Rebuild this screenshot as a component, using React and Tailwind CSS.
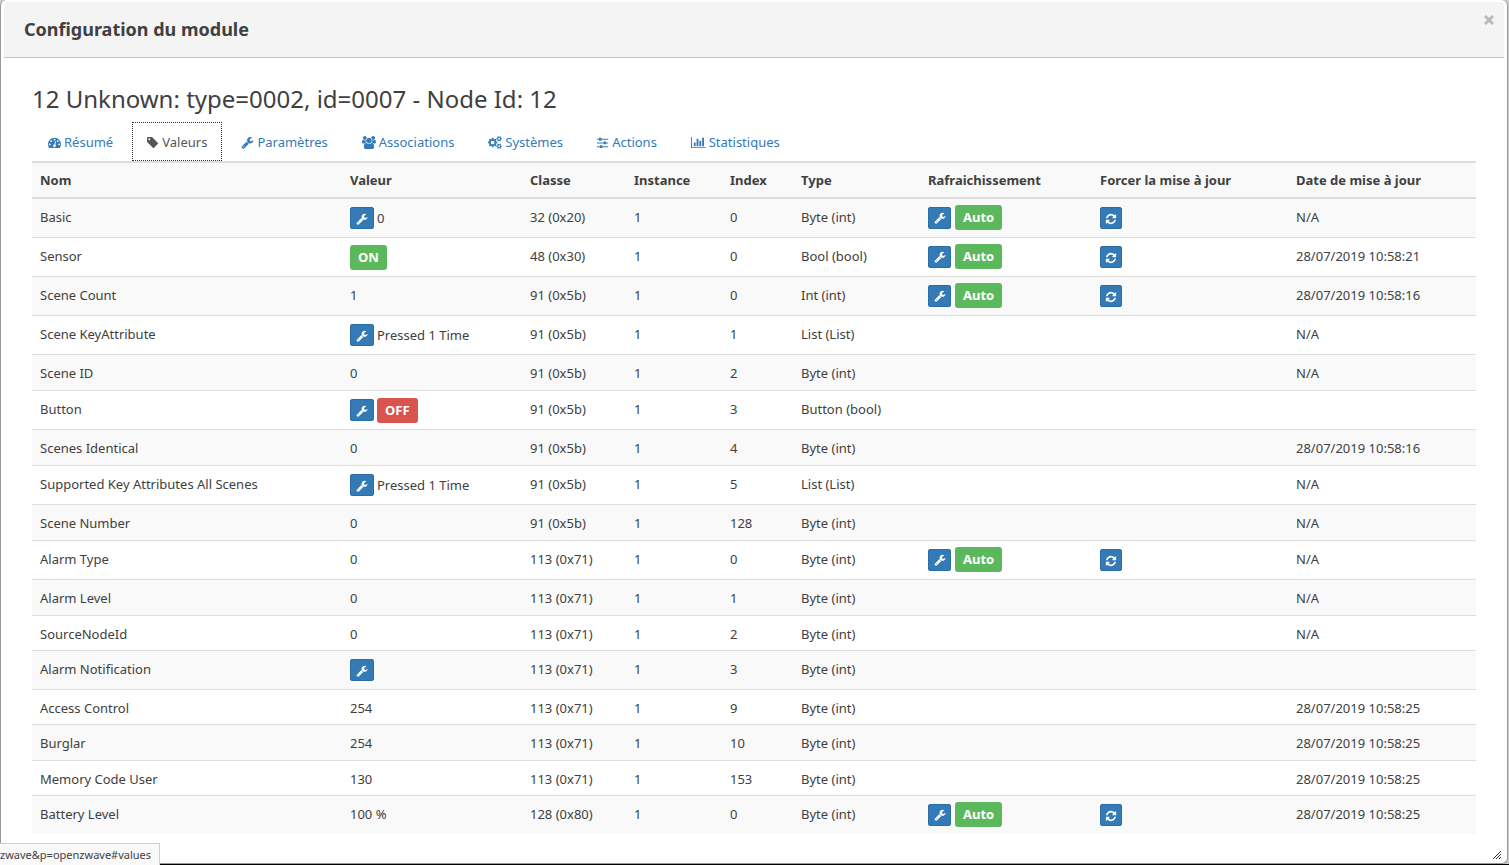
import clsx from 'clsx'

const ICONS = {
  dashboard: {
    width: 1792,
    path: 'M384 1152q0-53-37.5-90.5t-90.5-37.5-90.5 37.5-37.5 90.5 37.5 90.5 90.5 37.5 90.5-37.5 37.5-90.5zm192-448q0-53-37.5-90.5t-90.5-37.5-90.5 37.5-37.5 90.5 37.5 90.5 90.5 37.5 90.5-37.5 37.5-90.5zm428 481l101-382q6-26-7.5-48.5t-38.5-29.5-48 6.5-30 39.5l-101 382q-60 5-107 43.5t-63 98.5q-20 77 20 146t117 89 146-20 89-117q16-60-6-117t-72-91zm660-33q0-53-37.5-90.5t-90.5-37.5-90.5 37.5-37.5 90.5 37.5 90.5 90.5 37.5 90.5-37.5 37.5-90.5zm-640-640q0-53-37.5-90.5t-90.5-37.5-90.5 37.5-37.5 90.5 37.5 90.5 90.5 37.5 90.5-37.5 37.5-90.5zm448 192q0-53-37.5-90.5t-90.5-37.5-90.5 37.5-37.5 90.5 37.5 90.5 90.5 37.5 90.5-37.5 37.5-90.5zm320 448q0 261-141 483-19 29-54 29h-1402q-35 0-54-29-141-221-141-483 0-182 71-348t191-286 286-191 348-71 348 71 286 191 191 286 71 348z',
  },
  tag: {
    width: 1664,
    path: 'M448 448q0-53-37.5-90.5t-90.5-37.5-90.5 37.5-37.5 90.5 37.5 90.5 90.5 37.5 90.5-37.5 37.5-90.5zm1067 576q0 53-37 90l-491 492q-39 37-91 37-53 0-90-37l-715-716q-38-37-64.5-101t-26.5-117v-416q0-52 38-90t90-38h416q53 0 117 26.5t102 64.5l715 714q37 39 37 91z',
  },
  wrench: {
    width: 1792,
    path: 'M448 1472q0-26-19-45t-45-19-45 19-19 45 19 45 45 19 45-19 19-45zm644-420l-682 682q-37 37-90 37-52 0-91-37l-106-108q-38-36-38-90 0-53 38-91l681-681q39 98 114.5 173.5t173.5 114.5zm634-435q0 39-23 106-47 134-164.5 217.5t-258.5 83.5q-185 0-316.5-131.5t-131.5-316.5 131.5-316.5 316.5-131.5q58 0 121.5 16.5t107.5 46.5q16 11 16 28t-16 28l-293 169v224l193 107q5-3 79-48.5t135.5-81 70.5-35.5q15 0 23.5 10t8.5 25z',
  },
  users: {
    width: 1920,
    path: 'M593 896q-162 5-265 128h-134q-82 0-138-40.5t-56-118.5q0-353 124-353 6 0 43.5 21t97.5 42.5 119 21.5q67 0 133-23-5 37-5 66 0 139 81 256zm1071 637q0 120-73 189.5t-194 69.5h-874q-121 0-194-69.5t-73-189.5q0-53 3.5-103.5t14-109 26.5-108.5 43-97.5 62-81 85.5-53.5 111.5-20q10 0 43 21.5t73 48 107 48 135 21.5 135-21.5 107-48 73-48 43-21.5q61 0 111.5 20t85.5 53.5 62 81 43 97.5 26.5 108.5 14 109 3.5 103.5zm-1024-1277q0 106-75 181t-181 75-181-75-75-181 75-181 181-75 181 75 75 181zm704 384q0 159-112.5 271.5t-271.5 112.5-271.5-112.5-112.5-271.5 112.5-271.5 271.5-112.5 271.5 112.5 112.5 271.5zm576 225q0 78-56 118.5t-138 40.5h-134q-103-123-265-128 81-117 81-256 0-29-5-66 66 23 133 23 59 0 119-21.5t97.5-42.5 43.5-21q124 0 124 353zm-128-609q0 106-75 181t-181 75-181-75-75-181 75-181 181-75 181 75 75 181z',
  },
  cogs: {
    width: 1920,
    path: 'M896 896q0-106-75-181t-181-75-181 75-75 181 75 181 181 75 181-75 75-181zm768 512q0-52-38-90t-90-38-90 38-38 90q0 53 37.5 90.5t90.5 37.5 90.5-37.5 37.5-90.5zm0-1024q0-52-38-90t-90-38-90 38-38 90q0 53 37.5 90.5t90.5 37.5 90.5-37.5 37.5-90.5zm-384 421v185q0 10-7 19.5t-16 10.5l-155 24q-11 35-32 76 34 48 90 115 7 11 7 20 0 12-7 19-23 30-82.5 89.5t-78.5 59.5q-11 0-21-7l-115-90q-37 19-77 31-11 108-23 155-7 24-30 24h-186q-11 0-20-7.5t-10-17.5l-23-153q-34-10-75-31l-118 89q-7 7-20 7-11 0-21-8-144-133-144-160 0-9 7-19 10-14 41-53t47-61q-23-44-35-82l-152-24q-10-1-17-9.5t-7-19.5v-185q0-10 7-19.5t16-10.5l155-24q11-35 32-76-34-48-90-115-7-11-7-20 0-12 7-20 22-30 82-89t79-59q11 0 21 7l115 90q34-18 77-32 11-108 23-154 7-24 30-24h186q11 0 20 7.5t10 17.5l23 153q34 10 75 31l118-89q8-7 20-7 11 0 21 8 144 133 144 160 0 8-7 19-12 16-42 54t-45 60q23 48 34 82l152 23q10 2 17 10.5t7 19.5zm640 533v140q0 16-149 31-12 27-30 52 51 113 51 138 0 4-4 7-122 71-124 71-8 0-46-47t-52-68q-20 2-30 2t-30-2q-14 21-52 68t-46 47q-2 0-124-71-4-3-4-7 0-25 51-138-18-25-30-52-149-15-149-31v-140q0-16 149-31 13-29 30-52-51-113-51-138 0-4 4-7 4-2 35-20t59-34 30-16q8 0 46 46.5t52 67.5q20-2 30-2t30 2q51-71 92-112l6-2q4 0 124 70 4 3 4 7 0 25-51 138 17 23 30 52 149 15 149 31zm0-1024v140q0 16-149 31-12 27-30 52 51 113 51 138 0 4-4 7-122 71-124 71-8 0-46-47t-52-68q-20 2-30 2t-30-2q-14 21-52 68t-46 47q-2 0-124-71-4-3-4-7 0-25 51-138-18-25-30-52-149-15-149-31v-140q0-16 149-31 13-29 30-52-51-113-51-138 0-4 4-7 4-2 35-20t59-34 30-16q8 0 46 46.5t52 67.5q20-2 30-2t30 2q51-71 92-112l6-2q4 0 124 70 4 3 4 7 0 25-51 138 17 23 30 52 149 15 149 31z',
  },
  sliders: {
    width: 1664,
    path: 'M352 1408v128h-352v-128h352zm352-128q26 0 45 19t19 45v256q0 26-19 45t-45 19h-256q-26 0-45-19t-19-45v-256q0-26 19-45t45-19h256zm160-384v128h-864v-128h864zm-640-512v128h-224v-128h224zm1312 1024v128h-736v-128h736zm-960-1152q26 0 45 19t19 45v256q0 26-19 45t-45 19h-256q-26 0-45-19t-19-45v-256q0-26 19-45t45-19h256zm640 512q26 0 45 19t19 45v256q0 26-19 45t-45 19h-256q-26 0-45-19t-19-45v-256q0-26 19-45t45-19h256zm320 128v128h-224v-128h224zm0-512v128h-864v-128h864z',
  },
  chart: {
    width: 2048,
    path: 'M640 896v512h-256v-512h256zm384-512v1024h-256v-1024h256zm1024 1152v128h-2048v-1536h128v1408h1920zm-640-896v768h-256v-768h256zm384-384v1152h-256v-1152h256z',
  },
  refresh: {
    width: 1792,
    path: 'M1639 1056q0 5-1 7-64 268-268 434.5t-478 166.5q-146 0-282.5-55t-243.5-157l-129 129q-19 19-45 19t-45-19-19-45v-448q0-26 19-45t45-19h448q26 0 45 19t19 45-19 45l-137 137q71 66 161 102t187 36q134 0 250-65t186-179q11-17 53-117 8-23 30-23h192q13 0 22.5 9.5t9.5 22.5zm25-800v448q0 26-19 45t-45 19h-448q-26 0-45-19t-19-45 19-45l138-138q-148-137-349-137-134 0-250 65t-186 179q-11 17-53 117-8 23-30 23h-199q-13 0-22.5-9.5t-9.5-22.5v-7q65-268 270-434.5t480-166.5q146 0 284 55.5t245 156.5l130-129q19-19 45-19t45 19 19 45z',
  },
}

function Icon({ name, className = 'h-[13px]' }) {
  const { width, path } = ICONS[name]
  return (
    <svg viewBox={`0 0 ${width} 1792`} className={clsx('w-auto shrink-0', className)} fill="currentColor" aria-hidden="true">
      <path d={path} />
    </svg>
  )
}

const tabs = [
  { id: 'summary', label: 'Résumé', icon: 'dashboard' },
  { id: 'values', label: 'Valeurs', icon: 'tag' },
  { id: 'parameters', label: 'Paramètres', icon: 'wrench' },
  { id: 'groups', label: 'Associations', icon: 'users' },
  { id: 'systems', label: 'Systèmes', icon: 'cogs' },
  { id: 'actions', label: 'Actions', icon: 'sliders' },
  { id: 'statistics', label: 'Statistiques', icon: 'chart' },
]

const columns = [
  { label: 'Nom', width: 'w-[310px]' },
  { label: 'Valeur', width: 'w-[180px]' },
  { label: 'Classe', width: 'w-[104px]' },
  { label: 'Instance', width: 'w-24' },
  { label: 'Index', width: 'w-[71px]' },
  { label: 'Type', width: 'w-[127px]' },
  { label: 'Rafraichissement', width: 'w-[172px]' },
  { label: 'Forcer la mise à jour', width: 'w-[196px]' },
  { label: 'Date de mise à jour', width: 'w-[188px]' },
]

const rows = [
  { name: 'Basic', value: '0', edit: true, cls: '32 (0x20)', index: 0, type: 'Byte (int)', poll: true, date: 'N/A' },
  { name: 'Sensor', value: 'ON', cls: '48 (0x30)', index: 0, type: 'Bool (bool)', poll: true, date: '28/07/2019 10:58:21' },
  { name: 'Scene Count', value: '1', cls: '91 (0x5b)', index: 0, type: 'Int (int)', poll: true, date: '28/07/2019 10:58:16' },
  { name: 'Scene KeyAttribute', value: 'Pressed 1 Time', edit: true, cls: '91 (0x5b)', index: 1, type: 'List (List)', date: 'N/A' },
  { name: 'Scene ID', value: '0', cls: '91 (0x5b)', index: 2, type: 'Byte (int)', date: 'N/A' },
  { name: 'Button', value: 'OFF', edit: true, cls: '91 (0x5b)', index: 3, type: 'Button (bool)', date: '' },
  { name: 'Scenes Identical', value: '0', cls: '91 (0x5b)', index: 4, type: 'Byte (int)', date: '28/07/2019 10:58:16' },
  { name: 'Supported Key Attributes All Scenes', value: 'Pressed 1 Time', edit: true, cls: '91 (0x5b)', index: 5, type: 'List (List)', date: 'N/A' },
  { name: 'Scene Number', value: '0', cls: '91 (0x5b)', index: 128, type: 'Byte (int)', date: 'N/A' },
  { name: 'Alarm Type', value: '0', cls: '113 (0x71)', index: 0, type: 'Byte (int)', poll: true, date: 'N/A' },
  { name: 'Alarm Level', value: '0', cls: '113 (0x71)', index: 1, type: 'Byte (int)', date: 'N/A' },
  { name: 'SourceNodeId', value: '0', cls: '113 (0x71)', index: 2, type: 'Byte (int)', date: 'N/A' },
  { name: 'Alarm Notification', value: '', edit: true, cls: '113 (0x71)', index: 3, type: 'Byte (int)', date: '' },
  { name: 'Access Control', value: '254', cls: '113 (0x71)', index: 9, type: 'Byte (int)', date: '28/07/2019 10:58:25' },
  { name: 'Burglar', value: '254', cls: '113 (0x71)', index: 10, type: 'Byte (int)', date: '28/07/2019 10:58:25' },
  { name: 'Memory Code User', value: '130', cls: '113 (0x71)', index: 153, type: 'Byte (int)', date: '28/07/2019 10:58:25' },
  { name: 'Battery Level', value: '100 %', cls: '128 (0x80)', index: 0, type: 'Byte (int)', poll: true, date: '28/07/2019 10:58:25' },
]

function IconButton({ icon, label, className }) {
  return (
    <button
      type="button"
      aria-label={label}
      className={clsx(
        'flex h-[22px] items-center justify-center rounded-[2px] border border-[#2e6da4] bg-[#337ab7] pt-px text-white',
        className
      )}
    >
      <Icon name={icon} className="h-3" />
    </button>
  )
}

function Label({ children, className }) {
  return (
    <span className={clsx('flex h-[25px] items-center rounded-[3px] px-2 font-bold text-white', className)}>
      {children}
    </span>
  )
}

function Value({ row }) {
  const isSwitch = row.value === 'ON' || row.value === 'OFF'

  if (!row.edit && !isSwitch) {
    return row.value
  }

  return (
    <div className="-mt-[3px] flex h-[26px] items-center gap-[3px]">
      {row.edit && <IconButton icon="wrench" label={`Modifier ${row.name}`} className="w-6" />}
      {isSwitch ? (
        <Label className={row.value === 'ON' ? 'bg-[#5cb85c]' : 'bg-[#d9534f]'}>{row.value}</Label>
      ) : (
        <span>{row.value}</span>
      )}
    </div>
  )
}

function ValuesTable() {
  return (
    <table className="w-full table-fixed border-separate border-spacing-0 border-t border-[#ddd] text-left">
      <thead>
        <tr className="bg-[#f9f9f9]">
          {columns.map(({ label, width }) => (
            <th key={label} scope="col" className={clsx('border-b-2 border-[#ddd] px-2 pt-2 pb-[7px] font-bold whitespace-nowrap', width)}>
              {label}
            </th>
          ))}
        </tr>
      </thead>
      <tbody>
        {rows.map((row) => (
          <tr
            key={row.name}
            className="odd:h-9 odd:bg-[#f9f9f9] *:border-b *:border-[#ddd] *:px-2 *:pt-[9px] *:pb-1.5 *:align-top *:whitespace-nowrap last:*:border-b-0"
          >
            <td>{row.name}</td>
            <td>
              <Value row={row} />
            </td>
            <td>{row.cls}</td>
            <td>1</td>
            <td>{row.index}</td>
            <td>{row.type}</td>
            <td>
              {row.poll && (
                <div className="-mt-[3px] flex h-[25px] items-center gap-1">
                  <IconButton icon="wrench" label={`Rafraichissement de ${row.name}`} className="w-[23px]" />
                  <Label className="bg-[#5cb85c]">Auto</Label>
                </div>
              )}
            </td>
            <td>
              {row.poll && (
                <div className="-mt-[3px] flex h-[26px] items-center">
                  <IconButton icon="refresh" label={`Forcer la mise à jour de ${row.name}`} className="w-[22px]" />
                </div>
              )}
            </td>
            <td>{row.date}</td>
          </tr>
        ))}
      </tbody>
    </table>
  )
}

export default function App() {
  return (
    <div className="flex min-h-screen flex-col border-b border-black bg-[#ccc] pr-px font-['Noto_Sans',sans-serif] text-[13px] leading-[19px] text-[#404040]">
      <div role="dialog" aria-labelledby="dialog-title" className="relative flex grow flex-col rounded-md border border-t-0 border-[#999] bg-white pt-0.5">
        <header className="mx-[3px] flex h-14 items-center justify-between rounded-t-[4px] border-b border-[#c5c5c5] bg-[#f4f4f4] pl-5">
          <h1 id="dialog-title" className="pb-0.5 text-lg leading-6 font-bold">
            Configuration du module
          </h1>
          <button type="button" aria-label="Fermer" className="mr-2.5 self-start pt-[13px] text-[#bbb]">
            <svg viewBox="0 0 10 10" className="size-2.5" fill="none" stroke="currentColor" strokeWidth="3" aria-hidden="true">
              <path d="M1 1l8 8M9 1l-8 8" />
            </svg>
          </button>
        </header>

        <main className="px-[31px] pt-[26px] pb-[27px]">
          <h2 className="mb-2 text-2xl leading-[30px]">12 Unknown: type=0002, id=0007 - Node Id: 12</h2>

          <nav className="flex gap-1 border-b border-[#ddd] pl-px">
            {tabs.map((tab) => {
              const isActive = tab.id === 'values'
              return (
                <a
                  key={tab.id}
                  href={`#${tab.id}`}
                  className={clsx(
                    'flex h-[39px] items-center gap-[3px] border px-[14px] pt-0.5',
                    isActive ? 'border-dotted border-[#333] text-[#555]' : 'border-transparent text-[#337ab7]'
                  )}
                >
                  <Icon name={tab.icon} />
                  <span>{tab.label}</span>
                </a>
              )
            })}
          </nav>

          <ValuesTable />
        </main>

        <svg viewBox="0 0 8 8" className="absolute right-1.5 bottom-1 size-2" stroke="#333" strokeWidth="1" aria-hidden="true">
          <path d="M0 8L8 0M3 8L8 3M6 8L8 6" />
        </svg>
      </div>

      <div className="fixed bottom-0 left-0 h-[22px] border border-b-0 border-l-0 border-[#d0d0d0] bg-[#f9f9f9] pr-2 text-[11px] leading-[22px]">
        zwave&amp;p=openzwave#values
      </div>
    </div>
  )
}
